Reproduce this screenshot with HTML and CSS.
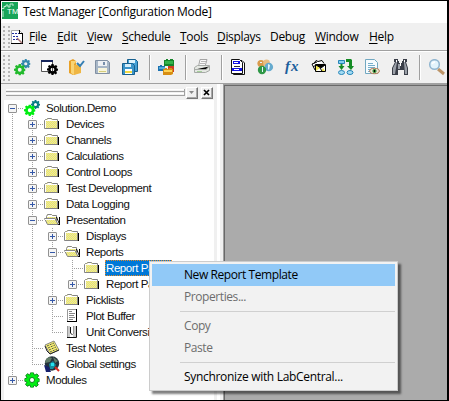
FILE: index.html
```html
<!DOCTYPE html>
<html lang="en">
<head>
<meta charset="utf-8">
<title>Test Manager</title>
<link rel="stylesheet" href="styles.css">
</head>
<body>
<svg class="defs" width="0" height="0">
  <defs>
    <pattern id="dither" width="2" height="2" patternUnits="userSpaceOnUse"><path fill="#f4ee58" d="M0 0h2v2H0z"/><path fill="#e2e0b4" d="M0 0h1v1H0zM1 1h1v1H1z"/></pattern>
    <symbol id="cog" viewBox="0 0 16 16"><path fill-rule="evenodd" d="M6.500 0h3l.5 2.200 1.200.5L13.200 1.500l1.900 2-1.300 1.800.5 1.200 1.700.3v2.800l-2 .5-.5 1.100 1.200 1.900-2 2-1.900-1.200-1.100.5L9.400 16H6.600l-.4-2-1.200-.5-1.900 1.200-2-2 1.200-1.900-.5-1.200L0 9.300V6.600l2-.4.5-1.200-1.200-1.800 2-1.900 1.800 1.200 1-.4zM8 5.300a2.700 2.700 0 1 0 0 5.400 2.700 2.700 0 0 0 0-5.400z"/></symbol>
    <symbol id="folder" viewBox="0 0 16 16"><path d="M2 13h13V5h-1v7H2z"/><path fill="url(#dither)" stroke="#858585" d="M.5 12.500v-8l1-1h1l1-1h4l1 1h5v9z"/><path fill="#fff" d="M4 3h3v1H4zM1 4h12v1H1zM1 5h1v7H1z"/></symbol>
    <symbol id="open" viewBox="0 0 16 16"><path fill="url(#dither)" stroke="#858585" d="M2.500 11V4.500l1-2h4l1 1h4v8"/><path d="M4 13h12V5h-1v5l-2-5h-1l3 7H4z"/><path fill="url(#dither)" stroke="#858585" d="M3.500 12.500l-3-6h10.500l3 6z"/><path fill="#fff" d="M4 3h4v1H4zM3 4h9v1H3zM1 7h10v1H1z"/></symbol>
  </defs>
</svg>
<div class="window">
  <header class="title">
    <svg width="16" height="17" viewBox="0 0 16 17"><path fill="#18a558" d="M0 0h16v17H0z"/><path fill="none" stroke="#bdebd0" d="M0 6.500h2v-2h2V3h2v2h2V2h3v2M1 9v6"/></svg>
    <b class="logo">TM</b>
    <h1>Test Manager [Configuration Mode]</h1>
  </header>
  <nav class="menubar">
    <i class="grip"></i>
    <svg class="doc" width="13" height="16" viewBox="0 0 13 16"><path fill="#fff" stroke="#aaa" d="M.5 1.500h8l3 3v10H.5z"/><path d="M0 14h12v1H0zM11 4h1v11h-1zM8 1h1v3h3v1H8z"/><path stroke="#2330a0" stroke-dasharray="2 1" d="M1 4.500h7M2 7.500h6M2 10.500h5"/><path stroke="#a77" stroke-width="1.500" d="M6 9l5 5"/></svg>
    <span class="m file"><u>F</u>ile</span><span class="m edit"><u>E</u>dit</span><span class="m view"><u>V</u>iew</span><span class="m schedule"><u>S</u>chedule</span><span class="m tools"><u>T</u>ools</span><span class="m displays"><u>D</u>isplays</span><span class="m debug">Debug</span><span class="m win"><u>W</u>indow</span><span class="m help"><u>H</u>elp</span>
  </nav>
  <div class="toolbar">
    <i class="grip"></i>
    <svg class="tool" viewBox="0 0 18 18"><use href="#cog" x="7" y="0" width="9.500" height="9.500" fill="#3489ad"/><use href="#cog" x="0" y="5" width="11.500" height="11.500" fill="#22ba2c"/></svg>
    <svg class="tool" viewBox="0 0 18 18"><path fill="#fff" stroke="#555" d="M.5 2.500h11v10H.5z"/><path fill="#16255b" d="M0 1h12v2H0z"/><use href="#cog" x="6" y="5" width="11" height="11"/></svg>
    <svg class="tool" viewBox="0 0 18 18"><path fill="#e9a127" d="M1 2l4-2 3 2v13l-3 1-4-2z"/><path fill="#f9d475" d="M3 2h6l-3 3v11l-3-2z"/><path fill="#efb643" d="M6 6l7-1v9l-7 2z"/><path fill="none" stroke="#347fb4" stroke-width="2" d="M9 4l3 3 4-5"/></svg>
    <svg class="tool" viewBox="0 0 18 18"><path fill="#a8b7c7" stroke="#8190a3" d="M.5 1.500h12l2 2v11H.5z"/><path fill="#eef1f4" d="M3 2h9v5H3z"/><path fill="#7890ac" d="M8 3h2v3H8z"/><path fill="#f8f5dd" d="M3 9h9v5H3z"/><path stroke="#d4cc7b" d="M4 12.500h7"/></svg>
    <svg class="tool" viewBox="0 0 18 18"><path fill="#45a0d5" stroke="#17608f" d="M5.500.5h8l2 2v10h-10z"/><path fill="#def2fc" d="M7 1h6v3H7z"/><path fill="#3c94c9" stroke="#17608f" d="M.5 4.500h10l2 2v9H.5z"/><path fill="#d5eefa" d="M3 5h6v3H3z"/><path fill="#fff" d="M3 10h7v5H3z"/><path fill="#f1d944" d="M3 12h7v2H3z"/></svg>
    <i class="sep"></i>
    <svg class="tool" viewBox="0 0 18 18"><path fill="#16862b" d="M6 1h2V0h2v1h2V0h3v1h1v6H6z"/><path fill="#34b34a" d="M7 2h8v3H7z"/><path fill="#1c72b1" d="M0 7h2V6h2v1h3v5H0z"/><path fill="#56abd8" d="M1 8h6v2H1z"/><path fill="#cf3d24" d="M10 7h6v6h-6z"/><path fill="#d78e13" d="M5 10h2V9h2v1h2V9h3v1h1v5l-2 1H5z"/><path fill="#ffd254" d="M6 11h8v2H6z"/></svg>
    <i class="sep"></i>
    <svg class="tool" viewBox="0 0 18 18"><path fill="#f9f9f9" stroke="#a4a4a4" d="M4.500 7.500L6 .5h7l-2 7"/><path stroke="#b8b8b8" d="M7 2.500h5M6 4.500h5"/><path fill="#e4e7e2" stroke="#a6aaa6" d="M.5 8.500l3-2h12v5l-4 2H.5z"/><path stroke="#a6aaa6" d="M1 10.500h11l3-3"/><path stroke="#a5ce9b" d="M3 12.500h5"/></svg>
    <i class="sep"></i>
    <svg class="tool" viewBox="0 0 18 18"><path fill="#fff" stroke="#111" d="M3.500 15.500h11V4L12 1.500H3.500z"/><path fill="#fff" stroke="#111" d="M1.500.5h8l3 3v11h-11z"/><path fill="#1212e4" d="M3 2h7v3H3zM2 9h10v3H2z"/><path stroke="#333" d="M4 7.500h6"/><path stroke="#fff" d="M4 3.500h4M4 10.500h5"/></svg>
    <svg class="tool" viewBox="0 0 18 18"><circle cx="4" cy="4.500" r="3.600" fill="#d99a4c"/><circle cx="9.500" cy="4" r="3.400" fill="#e8bd83"/><circle cx="11.800" cy="8" r="4.300" fill="#65aace"/><circle cx="5" cy="11" r="4.200" fill="#2e9746"/><path fill="#e4f6ff" d="M11 5l2 1-1 5-1-1zM5 8h1v5H5zM3 3h2v1H3z"/></svg>
    <svg class="tool fx" viewBox="0 0 18 18"><text x="1" y="12">f</text><text x="7" y="12">x</text></svg>
    <svg class="tool" viewBox="0 0 18 18"><path fill="#fff" stroke="#000" d="M3 4.500l2-3 2 1 4-1 2 3M4 11l-3-6 5-2M2 8l3-2M4.500 5.500h10v7h-10z"/><path fill="#f3e854" d="M5 6h4l1 2-5 4zM12 9l2 3h-4z"/><path stroke="#000" d="M5 6l5 3 4-3M9 9l2 3"/></svg>
    <svg class="tool" viewBox="0 0 18 18"><path fill="#83cef0" stroke="#2685b8" d="M.5 1.500h6v3h-6z"/><ellipse cx="3.500" cy="13.500" rx="3" ry="2" fill="#a4dcf3" stroke="#2685b8"/><ellipse cx="12" cy="13.500" rx="3" ry="2" fill="#a4dcf3" stroke="#2685b8"/><path fill="#148b24" d="M2.500 5h2v2h2l-3 4-3-4h2zM8 0h5l1 1v6h2l-3 4-4-4h2V3H8z"/></svg>
    <svg class="tool" viewBox="0 0 18 18"><path fill="#f6fbfe" stroke="#72a8c1" d="M.5.500h9l3 3v11H.5z"/><path stroke="#75aeca" d="M3 4.500h5M3 6.500h7M3 8.500h7M3 10.500h3M3 12.500h3"/><ellipse cx="9.500" cy="12" rx="4.800" ry="2.700" fill="#eee6d6" stroke="#b07954"/><circle cx="9.500" cy="12" r="2.100" fill="#358c37"/><path d="M9 11h1v2H9z"/></svg>
    <svg class="tool" viewBox="0 0 18 18"><path fill="#3a3e48" d="M2 0h4v2h1v2h3V2h1V0h4v3h-1l2 6v7h-4v-5H6v5H0V9l3-6H2z"/><path fill="#9ba0a8" d="M4 3h1L3 15H1V9zM12 3h1l2 6v6h-2zM6 5h2v5H6z"/><path fill="#fff" d="M4 1h1v2H4zM12 1h1v2h-1zM8 4h1v3H8z"/></svg>
    <i class="sep"></i>
    <svg class="tool" viewBox="0 0 18 18"><path stroke="#bd9568" stroke-width="3" d="M10 10l6 5"/><circle cx="6.500" cy="5.500" r="4.800" fill="#e3f4fc" stroke="#90b5cf" stroke-width="1.500"/><path fill="none" stroke="#fff" stroke-width="1.500" d="M4 5q1-2 3-2"/></svg>
  </div>
  <main>
    <aside>
      <div class="dock"><i class="ridges"></i><span class="btn"><svg width="9" height="9" viewBox="0 0 9 9"><path fill="#888" d="M2 3h5L4.500 6z"/></svg></span><span class="btn"><svg width="9" height="9" viewBox="0 0 9 9"><path stroke="#000" stroke-width="1.700" d="M2 2l5 5M7 2L2 7"/></svg></span></div>
      <div class="tree">
        <div class="row"><i class="g first"><b class="x minus"></b></i><svg class="ico wide" viewBox="0 0 17 16"><use href="#cog" x="7" y="0" width="9" height="9" fill="#087c87"/><use href="#cog" x="0" y="4.500" width="11.500" height="11.500" fill="#00ed12"/></svg><span>Solution.Demo</span></div>
        <div class="row"><i class="g"></i><i class="g tee"><b class="x"></b></i><svg class="ico" viewBox="0 0 16 16"><use href="#folder" width="16" height="16"/></svg><span>Devices</span></div>
        <div class="row"><i class="g"></i><i class="g tee"><b class="x"></b></i><svg class="ico" viewBox="0 0 16 16"><use href="#folder" width="16" height="16"/></svg><span>Channels</span></div>
        <div class="row"><i class="g"></i><i class="g tee"><b class="x"></b></i><svg class="ico" viewBox="0 0 16 16"><use href="#folder" width="16" height="16"/></svg><span>Calculations</span></div>
        <div class="row"><i class="g"></i><i class="g tee"><b class="x"></b></i><svg class="ico" viewBox="0 0 16 16"><use href="#folder" width="16" height="16"/></svg><span>Control Loops</span></div>
        <div class="row"><i class="g"></i><i class="g tee"><b class="x"></b></i><svg class="ico" viewBox="0 0 16 16"><use href="#folder" width="16" height="16"/></svg><span>Test Development</span></div>
        <div class="row"><i class="g"></i><i class="g tee"><b class="x"></b></i><svg class="ico" viewBox="0 0 16 16"><use href="#folder" width="16" height="16"/></svg><span>Data Logging</span></div>
        <div class="row"><i class="g"></i><i class="g tee"><b class="x minus"></b></i><svg class="ico" viewBox="0 0 16 16"><use href="#open" width="16" height="16"/></svg><span>Presentation</span></div>
        <div class="row"><i class="g"></i><i class="g"></i><i class="g tee"><b class="x"></b></i><svg class="ico" viewBox="0 0 16 16"><use href="#folder" width="16" height="16"/></svg><span>Displays</span></div>
        <div class="row"><i class="g"></i><i class="g"></i><i class="g tee"><b class="x minus"></b></i><svg class="ico" viewBox="0 0 16 16"><use href="#open" width="16" height="16"/></svg><span>Reports</span></div>
        <div class="row"><i class="g"></i><i class="g"></i><i class="g"></i><i class="g tee"></i><svg class="ico" viewBox="0 0 16 16"><use href="#folder" width="16" height="16"/></svg><span class="sel">Report Pages</span></div>
        <div class="row"><i class="g"></i><i class="g"></i><i class="g"></i><i class="g end"><b class="x"></b></i><svg class="ico" viewBox="0 0 16 16"><use href="#folder" width="16" height="16"/></svg><span>Report Pages</span></div>
        <div class="row"><i class="g"></i><i class="g"></i><i class="g tee"><b class="x"></b></i><svg class="ico" viewBox="0 0 16 16"><use href="#folder" width="16" height="16"/></svg><span>Picklists</span></div>
        <div class="row"><i class="g"></i><i class="g"></i><i class="g tee"></i><svg class="ico" viewBox="0 0 16 16"><path fill="#fff" stroke="#999" d="M3.500 1.500h9v12h-9z"/><path d="M3 14h10V1h-1v12H3z"/><path stroke="#888" d="M5 3.500h3M5 5.500h6M5 7.500h5M5 9.500h6M5 11.500h4"/></svg><span>Plot Buffer</span></div>
        <div class="row"><i class="g"></i><i class="g"></i><i class="g end"></i><svg class="ico" viewBox="0 0 16 16"><path fill="#ccc" d="M3 2h3v11H3zM9 2h3v11H9z"/><path stroke="#999" d="M3.500 2v11M9.500 2v8"/><path fill="none" stroke="#111" d="M6.500 3v6l2 2M12.500 2v11.500H3"/></svg><span>Unit Conversions</span></div>
        <div class="row"><i class="g"></i><i class="g tee"></i><svg class="ico" viewBox="0 0 16 16"><path fill="#f8f16d" stroke="#888" d="M1 5l9-4 5 9-9 4z"/><path fill="none" stroke="#555" stroke-dasharray="2 1" d="M3 6l7-3M4 8l7-3M5 10l7-3M6 12l7-3"/><path fill="none" stroke="#222" d="M1 6l2 5 3 3 9-4"/></svg><span>Test Notes</span></div>
        <div class="row"><i class="g"></i><i class="g end"></i><svg class="ico" viewBox="0 0 16 16"><circle cx="8" cy="7.500" r="7.200" fill="#26333c"/><path fill="#617c68" d="M2 3l3-2 3 1-2 4-5 1zM9 1l5 4-3 2z"/><path fill="#168fa0" d="M5 8l4-3 3 4-3 4H6z"/><path fill="#26e1ed" d="M7 7h3v3H7z"/><path fill="#17206d" d="M0 9l5 2 2 5H2z"/><path stroke="#d82b22" stroke-width="2" d="M11 11l4 4"/></svg><span>Global settings</span></div>
        <div class="row"><i class="g end"><b class="x"></b></i><svg class="ico" viewBox="0 0 16 16"><use href="#cog" x=".5" y=".5" width="15" height="15" fill="#00ed12" stroke="#087c18"/></svg><span>Modules</span></div>
      </div>
    </aside>
    <section class="workspace"></section>
  </main>
  <div class="context">
    <div class="item hot">New Report Template</div>
    <div class="item off">Properties...</div>
    <hr>
    <div class="item off">Copy</div>
    <div class="item off">Paste</div>
    <hr>
    <div class="item sync">Synchronize with LabCentral...</div>
  </div>
</div>
</body>
</html>
```
FILE: styles.css
```css
* { box-sizing: border-box; }
body { margin: 0; overflow: hidden; font: 12px/16px "Open Sans", "Noto Sans", sans-serif; color: #000; }
svg { display: block; flex: none; }
.defs { position: absolute; }
.window { position: relative; width: 449px; height: 401px; border: 1px solid #000; border-right-width: 2px; background: #f0f0f0; display: flex; flex-direction: column; overflow: hidden; }
.title { height: 22px; flex: none; background: #fff; display: flex; align-items: center; padding-left: 1px; position: relative; }
.title svg { margin-top: -3px; }
.logo { position: absolute; left: 6px; top: 6px; font: 8px/10px "Liberation Sans", sans-serif; color: #fff; }
.title h1 { margin: 0 0 0 5px; font-size: 12px; font-weight: 400; letter-spacing: -.31px; white-space: nowrap; }
.menubar { height: 28px; flex: none; display: flex; align-items: center; border-bottom: 1px solid #a0a0a0; }
.grip { width: 7px; margin-left: 2px; height: 22px; flex: none; background: radial-gradient(circle at 1px 1px, #b4b4b4 1px, transparent 1.2px) 0 0 / 5px 4px; }
.doc { margin: 0 5px 0 1px; }
.m { flex: none; white-space: nowrap; letter-spacing: -.32px; }
.m u { text-underline-offset: 2px; text-decoration-thickness: 1px; }
.file { width: 28px; }
.edit { width: 30px; }
.view { width: 35px; }
.schedule { width: 58px; }
.tools { width: 37px; }
.displays { width: 53px; }
.debug { width: 45px; }
.win { width: 54px; }
.toolbar { height: 33px; flex: none; display: flex; align-items: center; border-top: 1px solid #fff; border-bottom: 1px solid #a0a0a0; }
.toolbar .grip { margin-right: 4px; height: 26px; }
.tool { width: 18px; height: 18px; margin-right: 9px; }
.tool:last-child { margin-right: 0; }
.fx { font: italic bold 15px "Liberation Serif", serif; fill: #1d5f9c; overflow: visible; }
.sep { width: 9px; height: 25px; flex: none; border-left: 1px solid #a0a0a0; box-shadow: inset 1px 0 #fff; }
main { flex: 1; min-height: 0; display: flex; }
aside { width: 216px; padding: 0 3px; flex: none; display: flex; flex-direction: column; border-right: 0; }
.dock { height: 16px; flex: none; display: flex; align-items: center; gap: 3px; padding: 1px 1px 0 2px; }
.ridges { flex: 1; height: 7px; margin-right: -2px; background: linear-gradient(#fff 1px, #f0f0f0 1px 2px, #a0a0a0 2px 3px, transparent 3px 4px, #fff 4px 5px, #f0f0f0 5px 6px, #a0a0a0 6px); border-right: 1px solid #a0a0a0; }
.btn { width: 12px; height: 12px; border: 1px solid #fff; border-right-color: #777; border-bottom-color: #777; box-shadow: inset -1px -1px #a8a8a8; }
.tree { flex: 1; margin-right: 0; background: #fff; overflow: hidden; font: 11.5px/16px "Liberation Sans", sans-serif; color: #111; }
.row { display: flex; height: 16px; }
.row span { margin-left: 5px; padding: 0 1px; white-space: nowrap; letter-spacing: -.42px; }
.row .sel { color: #fff; background: #0078d7; outline: 1px dotted #e58a28; outline-offset: -1px; }
.ico { width: 16px; height: 16px; }
.wide { width: 17px; margin-right: -1px; overflow: visible; }
.g { width: 20px; height: 16px; flex: none; padding: 4px 0 0 4px; background: repeating-linear-gradient(#a0a0a0 0 1px, transparent 1px 2px) 8px 0 / 1px 100% no-repeat; }
.tee { background: repeating-linear-gradient(#a0a0a0 0 1px, transparent 1px 2px) 8px 0 / 1px 100% no-repeat, repeating-linear-gradient(90deg, #a0a0a0 0 1px, transparent 1px 2px) 8px 8px / 12px 1px no-repeat; }
.end { background: repeating-linear-gradient(#a0a0a0 0 1px, transparent 1px 2px) 8px 0 / 1px 8px no-repeat, repeating-linear-gradient(90deg, #a0a0a0 0 1px, transparent 1px 2px) 8px 8px / 12px 1px no-repeat; }
.first { background: repeating-linear-gradient(#a0a0a0 0 1px, transparent 1px 2px) 8px 8px / 1px 8px no-repeat, repeating-linear-gradient(90deg, #a0a0a0 0 1px, transparent 1px 2px) 8px 8px / 12px 1px no-repeat; }
.x { display: block; width: 9px; height: 9px; border: 1px solid #929292; border-radius: 1px; background: linear-gradient(#3458a8, #3458a8) center / 5px 1px no-repeat, linear-gradient(#3458a8, #3458a8) center / 1px 5px no-repeat, #f5f5f5; }
.minus { background: linear-gradient(#3458a8, #3458a8) center / 5px 1px no-repeat, #f5f5f5; }
.workspace { flex: 1; margin-left: 6px; background: #ababab; border-left: 1px solid #a0a0a0; border-top: 1px solid #a0a0a0; box-shadow: -3px 0 #f0f0f0, -6px 0 #fff, inset 1px 1px #696969; }
.context { position: absolute; left: 148px; top: 260px; width: 249px; height: 130px; padding: 2px; background: #f2f2f2; border: 1px solid #ccc; box-shadow: 3px 3px 2px rgba(0, 0, 0, .5); }
.item { height: 22px; line-height: 22px; padding-left: 32px; white-space: nowrap; letter-spacing: -.42px; }
.sync { letter-spacing: -.32px; }
.hot { background: #91c9f7; }
.off { color: #6d6d6d; }
.context hr { height: 1px; margin: 3px 0 3px 28px; border: 0; background: #d0d0d0; }
```
